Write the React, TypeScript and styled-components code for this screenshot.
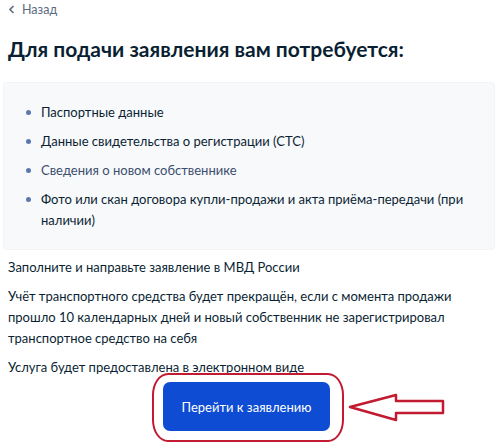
import React from "react";
import styled, { createGlobalStyle } from "styled-components";

const GlobalStyle = createGlobalStyle`
  html, body {
    margin: 0;
    padding: 0;
    background: #fff;
  }
  body {
    font-family: Lato, "Noto Sans", sans-serif;
    color: #0b1f33;
  }
`;

const Page = styled.div`
  width: 500px;
  height: 442px;
  overflow: hidden;
  padding: 0 8px;
  box-sizing: border-box;
`;

const BackLink = styled.a`
  display: flex;
  align-items: center;
  gap: 6px;
  height: 18px;
  font-size: 12.5px;
  color: #5c6b80;
  text-decoration: none;
`;

const Title = styled.h1`
  margin: 18px 0 0;
  font-size: 21px;
  font-weight: 700;
  line-height: 26px;
`;

const Card = styled.div`
  margin: 20px -3px 0 -5px;
  padding: 19px 0 18px 22px;
  background: #f8f9fb;
  border: 1px solid #f3f4f7;
  border-radius: 4px;
`;

const List = styled.ul`
  list-style: none;
  margin: 0;
  padding: 0;
  display: flex;
  flex-direction: column;
  gap: 8px;
`;

const Item = styled.li<{ $link?: boolean }>`
  position: relative;
  padding: 0 20px 0 15px;
  font-size: 13px;
  line-height: 21px;
  color: ${(p) => (p.$link ? "#3b4e6d" : "#0b1f33")};

  &::before {
    content: "";
    position: absolute;
    left: 0;
    top: 8px;
    width: 5px;
    height: 5px;
    border-radius: 50%;
    background: #5a78b0;
  }
`;

const Text = styled.p`
  margin: 7px 0 0;
  font-size: 13px;
  line-height: 21px;
  padding-right: 10px;

  & + & {
    margin-top: 8px;
  }
`;

const Actions = styled.div`
  display: flex;
  align-items: center;
  margin-top: 0;
  padding-left: 155px;
  gap: 16px;
`;

const ButtonWrap = styled.div`
  position: relative;
  padding: 4px 0;

  &::after {
    content: "";
    position: absolute;
    left: -11px;
    right: -14px;
    top: -5px;
    bottom: -7px;
    border: 2.5px solid #c21a30;
    border-radius: 16px / 22px;
    pointer-events: none;
  }
`;

const Button = styled.button`
  width: 167px;
  height: 49px;
  border: none;
  border-radius: 7px;
  background: #0d4cd3;
  color: #fff;
  font-family: Lato, "Noto Sans", sans-serif;
  font-size: 13px;
  cursor: pointer;
`;

const items = [
  { text: "Паспортные данные" },
  { text: "Данные свидетельства о регистрации (СТС)" },
  { text: "Сведения о новом собственнике", link: true },
  { text: "Фото или скан договора купли-продажи и акта приёма-передачи (при наличии)" },
];

export default function App() {
  return (
    <Page>
      <GlobalStyle />
      <BackLink href="#">
        <svg width="8" height="9" viewBox="0 0 8 9" fill="none">
          <path d="M5.5 1L2 4.5L5.5 8" stroke="#5c6b80" strokeWidth="1.6" />
        </svg>
        Назад
      </BackLink>
      <Title>Для подачи заявления вам потребуется:</Title>
      <Card>
        <List>
          {items.map((it) => (
            <Item key={it.text} $link={it.link}>
              {it.text}
            </Item>
          ))}
        </List>
      </Card>
      <Text>Заполните и направьте заявление в МВД России</Text>
      <Text>
        Учёт транспортного средства будет прекращён, если с момента продажи
        прошло 10 календарных дней и новый собственник не зарегистрировал
        транспортное средство на себя
      </Text>
      <Text>Услуга будет предоставлена в электронном виде</Text>
      <Actions>
        <ButtonWrap>
          <Button>Перейти к заявлению</Button>
        </ButtonWrap>
        <svg width="100" height="32" viewBox="0 0 100 32" fill="none">
          <path
            d="M4 16 L50 4 L50 10 L97 10 L97 22 L50 22 L50 29 Z"
            stroke="#c21a30"
            strokeWidth="2.5"
            strokeLinejoin="round"
          />
        </svg>
      </Actions>
    </Page>
  );
}
